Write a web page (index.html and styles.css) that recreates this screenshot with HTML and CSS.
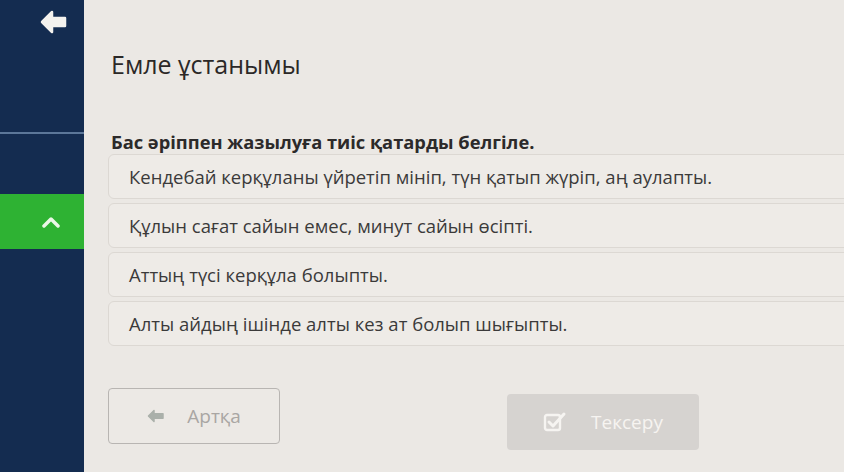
FILE: index.html
```html
<!DOCTYPE html>
<html lang="kk">
<head>
<meta charset="utf-8">
<title>Емле ұстанымы</title>
<link rel="stylesheet" href="styles.css">
</head>
<body>
<div class="app">
  <aside class="sidebar">
    <div class="side-top">
      <svg class="back-icon" width="28" height="24" viewBox="0 0 28 24"><path d="M12 2 L2 12 L12 22 L12 16 L25 16 L25 8 L12 8 Z" fill="#f4f2ee" stroke="#f4f2ee" stroke-width="2.5" stroke-linejoin="round"/></svg>
    </div>
    <div class="side-gap"></div>
    <div class="side-active">
      <svg width="18" height="12" viewBox="0 0 18 12"><path d="M2 10 L9 3 L16 10" fill="none" stroke="#eaf7e6" stroke-width="3.5" stroke-linecap="round" stroke-linejoin="round"/></svg>
    </div>
  </aside>
  <main class="main">
    <h1 class="title">Емле ұстанымы</h1>
    <p class="question">Бас әріппен жазылуға тиіс қатарды белгіле.</p>
    <ul class="options">
      <li class="option">Кендебай керқұланы үйретіп мініп, түн қатып жүріп, аң аулапты.</li>
      <li class="option">Құлын сағат сайын емес, минут сайын өсіпті.</li>
      <li class="option">Аттың түсі керқұла болыпты.</li>
      <li class="option">Алты айдың ішінде алты кез ат болып шығыпты.</li>
    </ul>
    <div class="actions">
      <button class="btn btn-back">
        <svg width="18" height="14" viewBox="0 0 18 14"><path d="M7 1.5 L1.5 7 L7 12.5 L7 9.2 L16 9.2 L16 4.8 L7 4.8 Z" fill="#aab0aa" stroke="#aab0aa" stroke-width="1.5" stroke-linejoin="round"/></svg>
        <span>Артқа</span>
      </button>
      <button class="btn btn-check">
        <svg width="24" height="22" viewBox="0 0 24 22"><rect x="2" y="4" width="15" height="15" rx="2" fill="none" stroke="#f6f4f1" stroke-width="2.4"/><path d="M6 11 L10 15 L21 3" fill="none" stroke="#f6f4f1" stroke-width="3" stroke-linecap="round" stroke-linejoin="round"/></svg>
        <span>Тексеру</span>
      </button>
    </div>
  </main>
</div>
</body>
</html>
```

FILE: styles.css
```css
* { box-sizing: border-box; }
html, body {
  margin: 0;
  padding: 0;
  width: 844px;
  height: 472px;
  overflow: hidden;
  font-family: "Open Sans", "Noto Sans", sans-serif;
}
.app {
  display: flex;
  height: 472px;
  background: #ebe8e4;
}
.sidebar {
  width: 84px;
  flex: none;
  background: #142c50;
  display: flex;
  flex-direction: column;
}
.side-top {
  height: 134px;
  border-bottom: 2px solid #5c7799;
  display: flex;
  justify-content: center;
  align-items: flex-start;
  padding-top: 10px;
  padding-left: 24px;
}
.side-gap {
  height: 60px;
}
.side-active {
  height: 55px;
  background: #2eb233;
  display: flex;
  justify-content: center;
  align-items: center;
  padding-left: 18px;
}
.main {
  flex: 1;
  padding-left: 24px;
  display: flex;
  flex-direction: column;
  overflow: hidden;
}
.title {
  margin: 46px 0 0 3px;
  font-size: 25px;
  font-weight: 400;
  color: #2b2827;
  line-height: 36px;
}
.question {
  margin: 48px 0 0 3px;
  font-size: 18.3px;
  font-weight: 700;
  color: #2c2a2a;
  line-height: 24px;
}
.options {
  list-style: none;
  margin: 0 -20px 0 0;
  padding: 0;
  display: flex;
  flex-direction: column;
  gap: 4px;
}
.option {
  height: 45px;
  display: flex;
  align-items: center;
  padding-left: 20px;
  font-size: 18.5px;
  color: #3b3a3a;
  background: #eeebe7;
  border: 1px solid #dcd8d3;
  border-radius: 6px;
}
.actions {
  display: flex;
  align-items: center;
  gap: 227px;
  margin-top: 36px;
}
.btn {
  height: 56px;
  border-radius: 4px;
  font-family: "Open Sans", "Noto Sans", sans-serif;
  font-size: 19px;
  display: flex;
  align-items: center;
  justify-content: center;
  gap: 22px;
  padding: 0;
}
.btn-back {
  width: 172px;
  background: #ece9e5;
  border: 1.5px solid #b8b5b2;
  color: #a9a6a3;
}
.btn-check {
  width: 192px;
  background: #d6d3d0;
  border: none;
  color: #f6f4f1;
  margin-top: 12px;
  gap: 24px;
}
```
